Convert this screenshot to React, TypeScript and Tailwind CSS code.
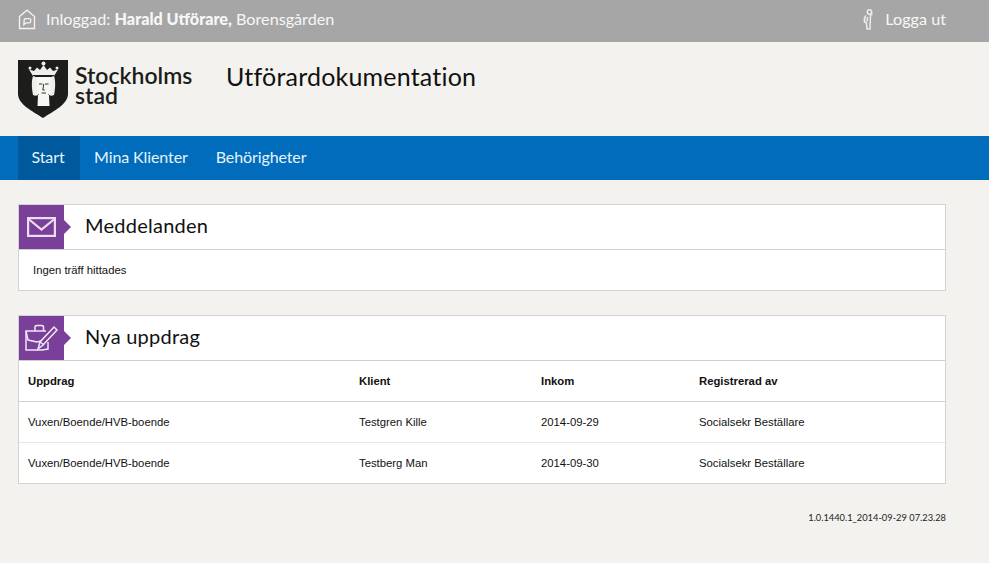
const head = { fontFamily: '"Lato", "Liberation Sans", sans-serif' };
const body = { fontFamily: '"Liberation Sans", Arial, sans-serif' };

function HomeIcon() {
  return (
    <svg width="18" height="21" viewBox="0 0 18 21" fill="none" stroke="#f4f4f4" strokeWidth="1.300" className="shrink-0">
      <path d="M1.500 7.500 9 1.200l7.500 6.300V19.500h-15Z" />
      <path d="M5.800 15.500 6.300 10.500a1 1 0 0 1 1-.8h4.500a1 1 0 0 1 1 1l-.3 2.300a1 1 0 0 1-1 .9H8Z" />
    </svg>
  );
}

function PersonIcon() {
  return (
    <svg width="14" height="21" viewBox="0 0 14 21" fill="none" stroke="#ececec" strokeWidth="1.500" className="shrink-0">
      <circle cx="7.500" cy="3" r="2.200" />
      <path d="M4 6.500C2.500 8 2 10 2.500 13l2 1 .5 6h3l.5-14 2-1" />
      <path d="M5.500 8 5 12.500" />
    </svg>
  );
}

function Logo() {
  return (
    <svg width="50" height="58" viewBox="0 0 50 58" className="shrink-0">
      <path d="M0 0h50v34C50 44 36 51 25 58 14 51 0 44 0 34Z" fill="#1d1d1b" />
      <path d="M15 16c-2 6-1 14 0 19 2 1 3 1 5 0l1-17Z" fill="#eeeeea" />
      <path d="M36 16c2 6 1 14 0 19-2 1-3 1-5 0l-1-17Z" fill="#eeeeea" />
      <path d="M18.500 17h14v12c0 4-3 8-7 8s-7-4-7-8Z" fill="#f6f6f2" />
      <path d="M20 35h11l.5 11h-12Z" fill="#f6f6f2" />
      <path d="M11 9.500 16 11l3-3.500L22 10l3.500-5 3.500 5 3-2.500 3 3.500 5-1.500-4 6.500H15Z" fill="#eeeeea" />
      <circle cx="25.500" cy="3.500" r="2" fill="#eeeeea" />
      <circle cx="12" cy="8" r="1.500" fill="#eeeeea" />
      <circle cx="39" cy="8" r="1.500" fill="#eeeeea" />
      <path d="M15 15.500h21" stroke="#1d1d1b" strokeWidth="1" />
      <path d="M21 24h3.500M27 24h3.500M25.800 24l-1 6h2M23.500 33h4.500" stroke="#1d1d1b" strokeWidth=".9" fill="none" />
    </svg>
  );
}

function MailIcon() {
  return (
    <svg width="29" height="20" viewBox="0 0 29 20" fill="none" stroke="#e9dff0" strokeWidth="2.200">
      <rect x="1.100" y="1.100" width="26.800" height="17.800" />
      <path d="M1.500 2 14.500 12.500 27.500 2" />
    </svg>
  );
}

function CaseIcon() {
  return (
    <svg width="34" height="28" viewBox="0 0 34 28" fill="none" stroke="#efe8f4" strokeWidth="1.500">
      <path d="M10 7V3c0-1 1-1.500 2-1.500h4.500c1 0 2 .5 2 1.500v4" />
      <path d="M21 7H1v19h16l6-1V18" />
      <path d="M1 7l2 9 9 2 4-1" />
      <path d="M13 25l2-7L29 3l3 3-14 15Z" />
      <path d="M15 18l4 3" />
    </svg>
  );
}

function Card({ icon, title, children }: { icon: React.ReactNode; title: string; children: React.ReactNode }) {
  return (
    <section className="bg-white border border-[#d3d3d3]">
      <div className="flex items-center h-[45px] border-b border-[#cfcfcf]">
        <div className="relative w-[45px] h-[44px] bg-[#7a3f98] flex items-center justify-center shrink-0">
          {icon}
          <span className="absolute left-full top-[15px] border-y-[7px] border-l-[7px] border-y-transparent border-l-[#7a3f98]" />
        </div>
        <h2 style={head} className="ml-[21px] mb-[4px] text-[20px] text-[#111] tracking-[0.25px]">{title}</h2>
      </div>
      {children}
    </section>
  );
}

const rows = [
  ["Vuxen/Boende/HVB-boende", "Testgren Kille", "2014-09-29", "Socialsekr Beställare"],
  ["Vuxen/Boende/HVB-boende", "Testberg Man", "2014-09-30", "Socialsekr Beställare"],
];

export default function App() {
  return (
    <div className="min-h-[563px] bg-[#f3f2ee] overflow-hidden" style={head}>
      <div className="h-[42px] bg-[#a6a6a6] flex items-center justify-between pl-[18px] pr-[43px] text-[#f7f7f7] text-[16.200px]">
        <div className="flex items-center gap-[10px] mb-[3px]">
          <HomeIcon />
          <span className="mb-[1px]">Inloggad: <b className="font-black">Harald Utförare,</b> Borensgården</span>
        </div>
        <div className="flex items-center gap-[9px] mb-[3px]">
          <PersonIcon />
          <span>Logga ut</span>
        </div>
      </div>

      <header className="h-[94px] flex items-start pl-[18px]">
        <div className="flex mt-[18px] w-[208px]">
          <Logo />
          <div className="ml-[7px] mt-[5px] text-[#1d1d1b] text-[23px] leading-[20px] font-semibold">
            <div>Stockholms</div>
            <div>stad</div>
          </div>
        </div>
        <h1 className="mt-[18px] text-[25px] leading-[32px] text-[#111] tracking-[0.200px]">Utförardokumentation</h1>
      </header>

      <nav className="h-[44px] bg-[#006cbb] flex pl-[18px] text-[16px] text-[#e6f4fb] tracking-[-0.1px]">
        <a className="w-[62px] pb-[2px] pr-[2px] bg-[#00599c] flex items-center justify-center">Start</a>
        <a className="ml-[14px] pb-[2px] flex items-center">Mina Klienter</a>
        <a className="ml-[28px] pb-[2px] flex items-center">Behörigheter</a>
      </nav>

      <main className="w-[928px] ml-[18px] mt-[24px] flex flex-col gap-[24px]">
        <Card icon={<MailIcon />} title="Meddelanden">
          <p style={body} className="h-[40px] pl-[14px] flex items-center text-[11.300px] text-[#111]">Ingen träff hittades</p>
        </Card>
        <Card icon={<CaseIcon />} title="Nya uppdrag">
          <div style={body} className="text-[11.300px] text-[#111]">
            <div className="grid grid-cols-[331px_182px_158px_1fr] pl-[9px] h-[41px] items-center font-bold border-b border-[#cfcfcf]">
              <span>Uppdrag</span><span>Klient</span><span>Inkom</span><span>Registrerad av</span>
            </div>
            {rows.map((r, i) => (
              <div key={i} className={`grid grid-cols-[331px_182px_158px_1fr] pl-[9px] items-center ${i === 0 ? "h-[41px] border-b border-[#e8e8e8]" : "h-[40px]"}`}>
                {r.map((c) => <span key={c}>{c}</span>)}
              </div>
            ))}
          </div>
        </Card>
        <p className="text-right text-[9.300px] text-[#222] mt-[3px]">1.0.1440.1_2014-09-29 07.23.28</p>
      </main>
    </div>
  );
}
